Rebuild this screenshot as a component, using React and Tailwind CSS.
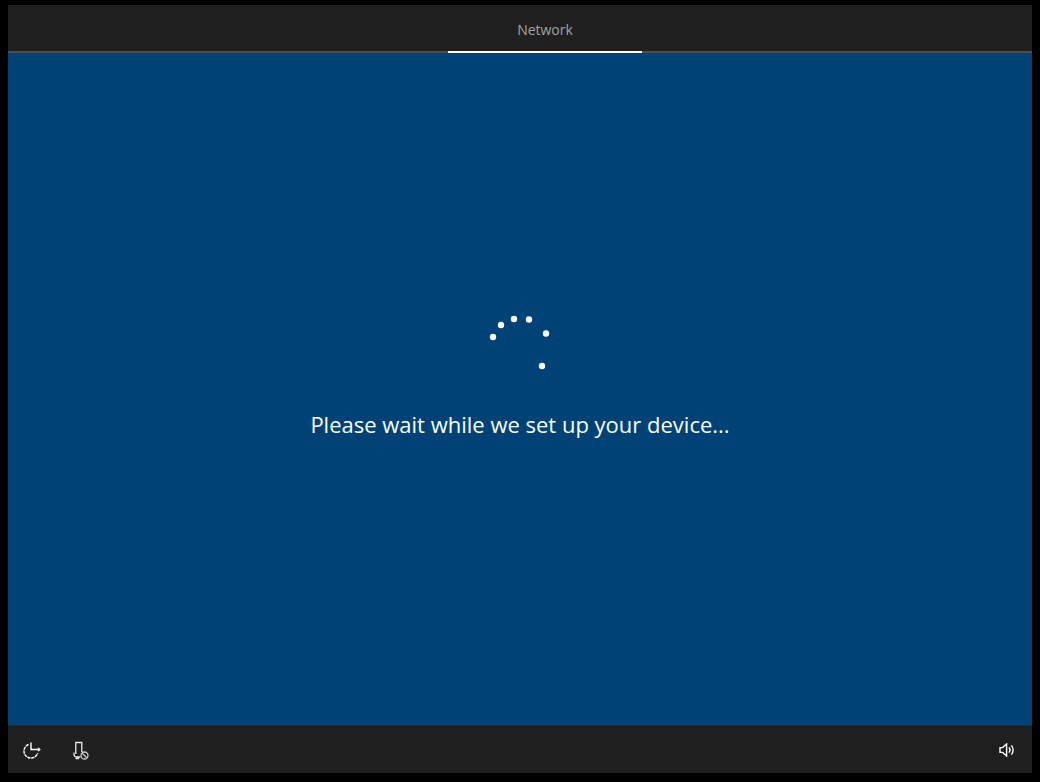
function Spinner() {
  // dots caught mid-animation
  return (
    <svg width="64" height="64" viewBox="0 0 64 64" className="block">
      <g fill="#fff">
        <circle cx="5" cy="23" r="3.2" />
        <circle cx="13" cy="11" r="3.2" />
        <circle cx="26" cy="5" r="3.2" />
        <circle cx="41" cy="5.5" r="3.2" />
        <circle cx="58" cy="19.5" r="3.2" />
        <circle cx="54" cy="52" r="3.2" />
      </g>
    </svg>
  )
}

function EaseIcon() {
  return (
    <svg width="18" height="18" viewBox="0 0 18 18" fill="none" stroke="#fff" strokeWidth="1.4">
      <path d="M5.5 3.5A7 7 0 1 0 14.7 12" strokeDasharray="3.2 0.7" />
      <path d="M8 1.5v7h8.7" />
      <path d="M15 6.9 16.8 8.5 15 10.1" />
    </svg>
  )
}

function MicIcon() {
  return (
    <svg width="18" height="20" viewBox="0 0 18 20" fill="none" stroke="#e8e8e8" strokeWidth="1.3">
      <path d="M2.8 14V2.5h6V12" />
      <path d="M1 12.5v2a2.5 2.5 0 0 0 2.5 2.5h4" />
      <path d="M5.5 17v1.5H2.5" />
      <circle cx="11.5" cy="15.5" r="3.5" stroke="#c8c8c8" />
      <path d="m9 13 5 5" stroke="#c8c8c8" />
    </svg>
  )
}

function VolumeIcon() {
  return (
    <svg width="16" height="14" viewBox="0 0 16 14" fill="none" stroke="#fff" strokeWidth="1.4">
      <path d="M1 4.6h2.6L7.6 1v12L3.6 9.4H1z" />
      <path d="M10 4.4a4 4 0 0 1 0 5.2" />
      <path d="M12.4 2.4a7 7 0 0 1 0 9.2" />
    </svg>
  )
}

export default function App() {
  return (
    <div className="w-[1040px] h-[782px] bg-black pt-[5px] px-2 pb-[9px] font-['Open_Sans','Noto_Sans',sans-serif]">
      <div className="flex flex-col h-full">
        <header className="h-12 shrink-0 bg-[#1f1f1f] border-b-2 border-[#4d4d4d] flex">
          <div className="ml-[440px] w-[194px] -mb-[2px] border-b-2 border-white flex items-center justify-center pt-[3px] text-sm text-[#a3a3a3]">
            Network
          </div>
        </header>

        <main className="flex-1 bg-[#004275] flex flex-col items-center justify-center pb-[25px]">
          <Spinner />
          <p className="mt-[30px] text-[22px] leading-8 text-white">Please wait while we set up your device...</p>
        </main>

        <footer className="h-12 shrink-0 bg-[#1f1f1f] border-t border-[#2b2b2b] flex items-center pl-[15px] pr-[17px]">
          <EaseIcon />
          <div className="ml-[32px]">
            <MicIcon />
          </div>
          <div className="ml-auto">
            <VolumeIcon />
          </div>
        </footer>
      </div>
    </div>
  )
}
